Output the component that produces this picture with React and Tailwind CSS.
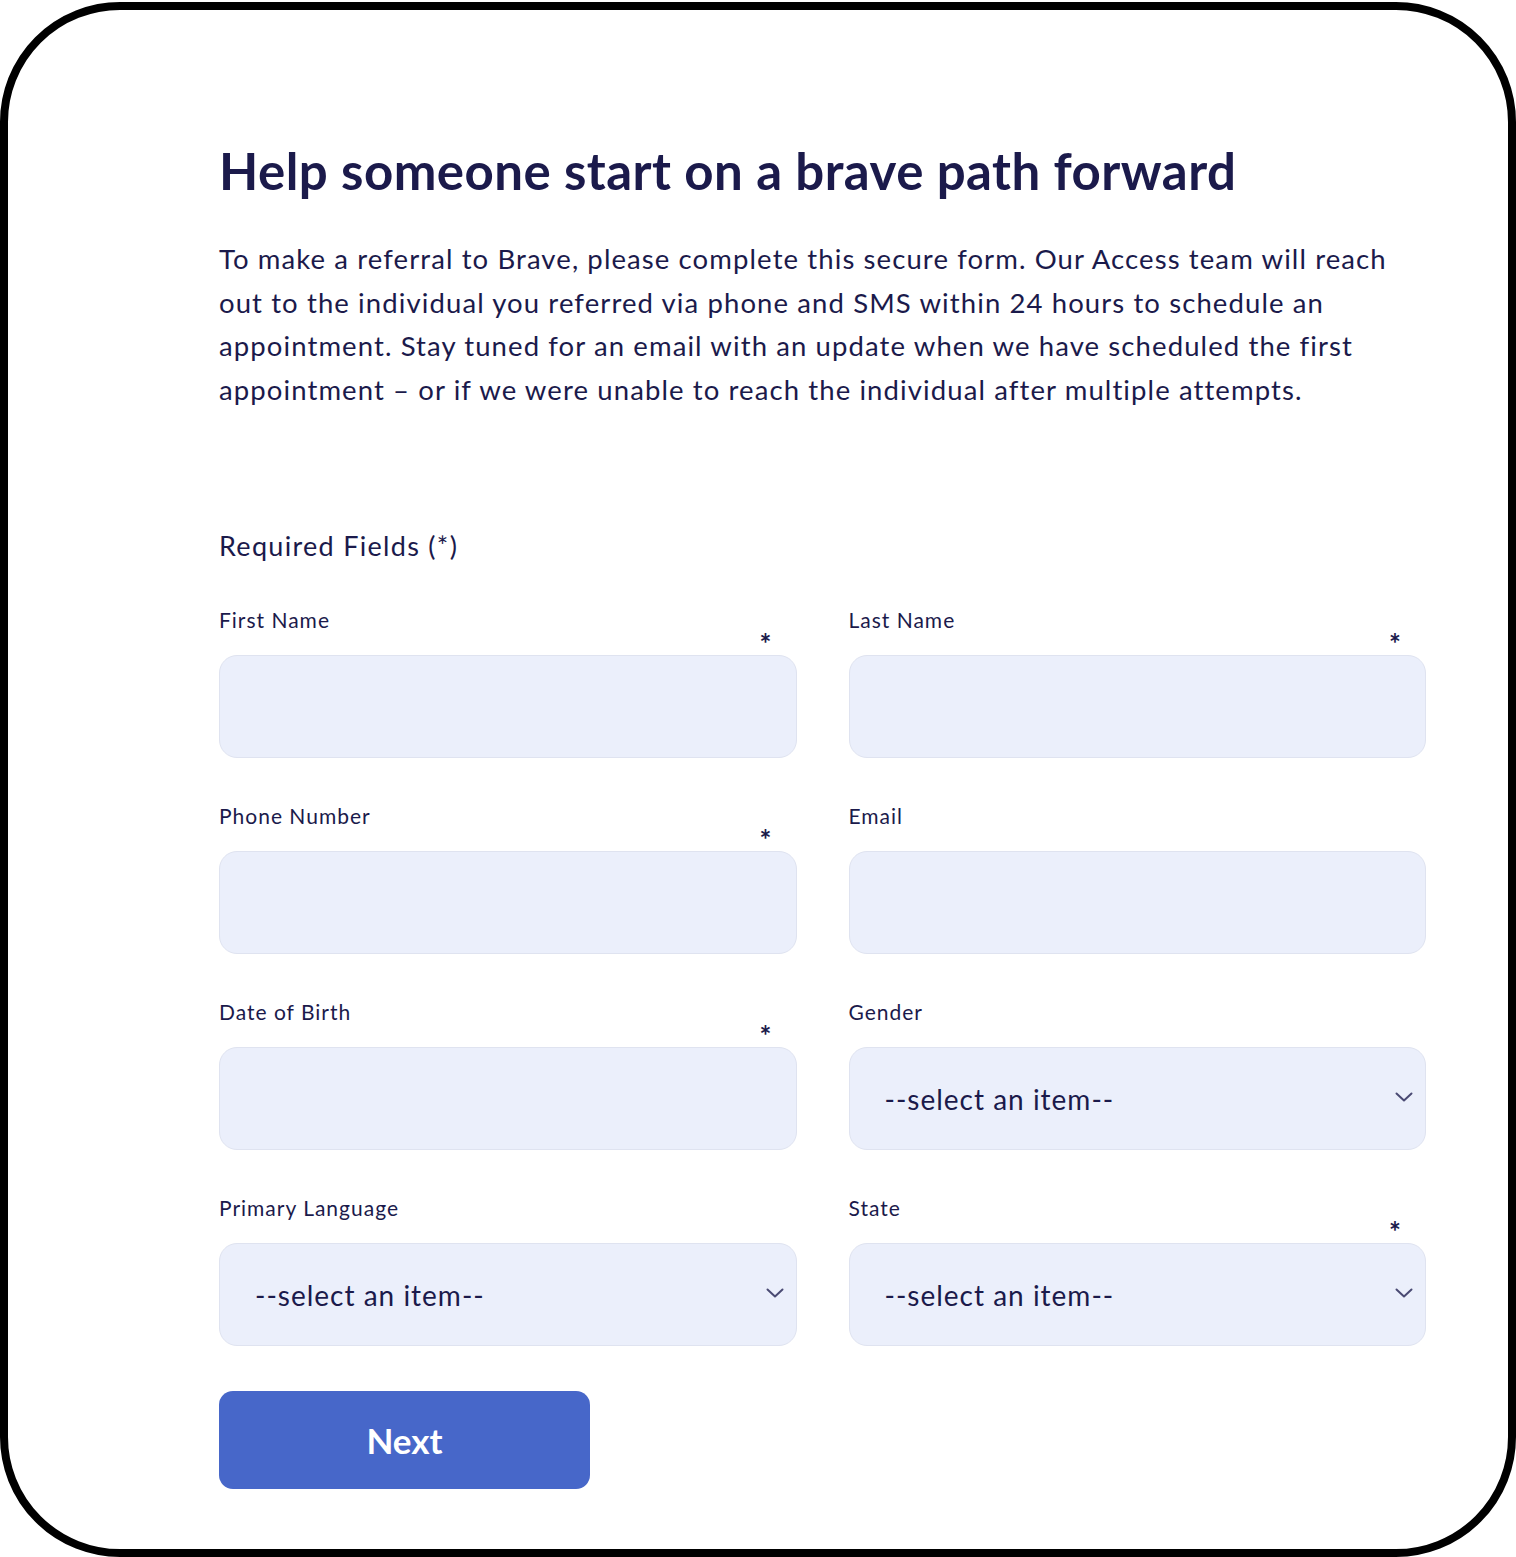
import React from 'react';

const navy = 'text-[#1b1a4b]';

const Field = ({ label, required, select }) => (
  <div className="flex flex-col">
    <label className="text-[21px] leading-[26px] tracking-[1px]">{label}</label>
    <div className="h-[22px] flex justify-end pr-[25px] pt-[3px]">
      {required && <span className="text-[28px] leading-[14px] font-bold">*</span>}
    </div>
    {select ? (
      <div className="h-[103px] rounded-[18px] border border-[#dfe3f0] bg-[#ebeffb] flex items-center justify-between pl-[35px] pr-[12px]">
        <span className="text-[28px] tracking-[1px]">--select an item--</span>
        <svg width="18" height="10" viewBox="0 0 18 10" fill="none" className="-mt-[4px]">
          <path d="M1.5 1.5 L9 8.5 L16.5 1.5" stroke="#4a4a73" strokeWidth="2" strokeLinecap="round" strokeLinejoin="round" />
        </svg>
      </div>
    ) : (
      <input className="h-[103px] w-full rounded-[18px] border border-[#dfe3f0] bg-[#ebeffb] px-[35px] text-[28px] outline-none" />
    )}
  </div>
);

const App = () => {
  return (
    <div className="bg-white w-[1516px] h-[1557px] pt-[2px]" style={{ fontFamily: 'Lato, "Open Sans", sans-serif' }}>
      <div className={`h-[1555px] border-[8px] border-black rounded-[120px] bg-white pl-[211px] pr-[60px] pt-[131px] ${navy}`}>
        <h1 className="text-[51px] leading-[60px] font-bold tracking-[0.45px]">Help someone start on a brave path forward</h1>
        <p className="mt-[36px] text-[27.5px] leading-[43.5px] tracking-[1.1px] whitespace-nowrap">
          To make a referral to Brave, please complete this secure form. Our Access team will reach
          <br />
          out to the individual you referred via phone and SMS within 24 hours to schedule an
          <br />
          appointment. Stay tuned for an email with an update when we have scheduled the first
          <br />
          appointment – or if we were unable to reach the individual after multiple attempts.
        </p>

        <h2 className="mt-[119px] text-[27px] leading-[32px] tracking-[1.3px]">Required Fields (*)</h2>

        <div className="mt-[45px] mr-[22px] grid grid-cols-2 gap-x-[52px] gap-y-[45px]">
          <Field label="First Name" required />
          <Field label="Last Name" required />
          <Field label="Phone Number" required />
          <Field label="Email" />
          <Field label="Date of Birth" required />
          <Field label="Gender" select />
          <Field label="Primary Language" select />
          <Field label="State" required select />
        </div>

        <button className="mt-[45px] w-[371px] h-[98px] rounded-[14px] bg-[#4767c9] text-white text-[35px] font-bold">
          Next
        </button>
      </div>
    </div>
  );
};

export default App;
